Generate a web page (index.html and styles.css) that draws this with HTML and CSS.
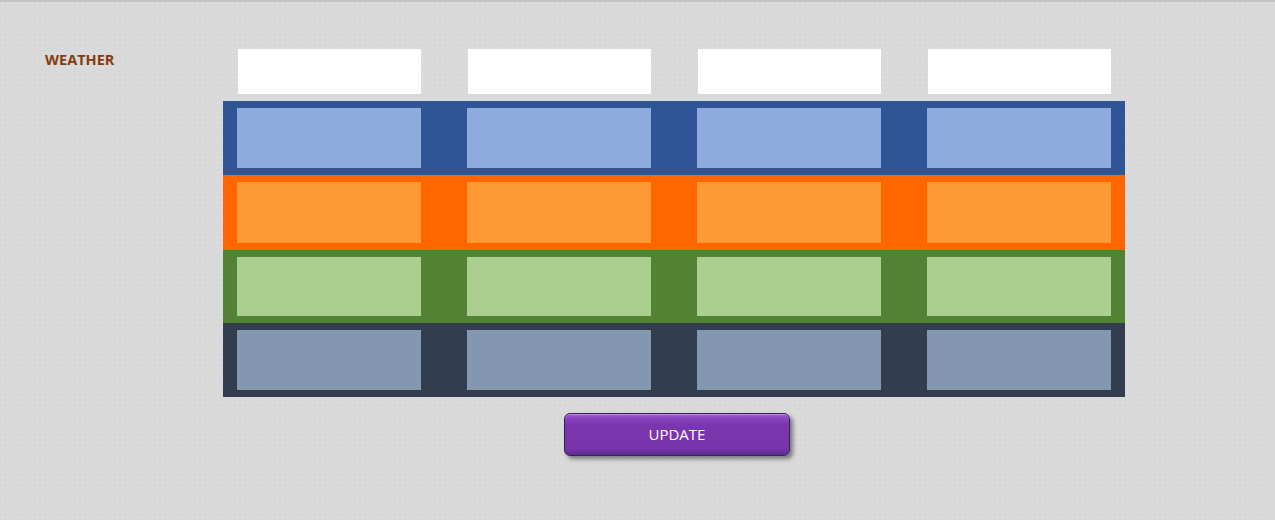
FILE: index.html
```html
<!DOCTYPE html>
<html lang="en">
<head>
    <meta charset="UTF-8">
    <meta name="viewport" content="width=device-width, initial-scale=1.0">
    <title>Weather</title>
    <link rel="stylesheet" href="styles.css">
</head>
<body>
    <div class="pagina">
        <div class="rotulo">WEATHER</div>

        <div class="painel">
            <div class="cabecalho">
                <div class="caixa-branca"></div>
                <div class="caixa-branca"></div>
                <div class="caixa-branca"></div>
                <div class="caixa-branca"></div>
            </div>

            <div class="faixa azul">
                <div class="celula"></div>
                <div class="celula"></div>
                <div class="celula"></div>
                <div class="celula"></div>
            </div>
            <div class="faixa laranja">
                <div class="celula"></div>
                <div class="celula"></div>
                <div class="celula"></div>
                <div class="celula"></div>
            </div>
            <div class="faixa verde">
                <div class="celula"></div>
                <div class="celula"></div>
                <div class="celula"></div>
                <div class="celula"></div>
            </div>
            <div class="faixa escura">
                <div class="celula"></div>
                <div class="celula"></div>
                <div class="celula"></div>
                <div class="celula"></div>
            </div>

            <button class="botao-update">UPDATE</button>
        </div>
    </div>
</body>
</html>
```

FILE: styles.css
```css
/* fundo cinza com pontinhos claros */
body {
    margin: 0;
    min-height: 100vh;
    box-sizing: border-box;
    font-family: "Open Sans", "Liberation Sans", sans-serif;
    background-color: #d9d9d9;
    background-image: radial-gradient(circle, #e6e3ee 0.6px, transparent 1px);
    background-size: 5px 5px;
    border-top: 2px solid #c4c4c4;
}

.pagina {
    display: flex;
    padding-top: 47px;
}

.rotulo {
    width: 178px;
    padding-left: 45px;
    color: #843c0c;
    font-size: 14.5px;
    font-weight: bold;
    line-height: 22px;
}

.painel {
    width: 902px;
}

.cabecalho {
    display: flex;
    gap: 47px;
    padding-left: 15px;
    margin-bottom: 7px;
}

.caixa-branca {
    width: 183px;
    height: 45px;
    background-color: #ffffff;
}

.faixa {
    display: flex;
    gap: 46px;
    padding: 7px 14px;
}

.celula {
    width: 184px;
    height: 60px;
}

.faixa.azul { background-color: #2f5597; }
.faixa.azul .celula { background-color: #8faadc; }

.faixa.laranja { background-color: #ff6600; height: 61px; }
.faixa.laranja .celula { background-color: #ff9933; height: 61px; }

.faixa.verde { background-color: #548235; }
.faixa.verde .celula { background-color: #abcf8f; height: 59px; }

.faixa.escura { background-color: #323e4f; }
.faixa.escura .celula { background-color: #8497b0; }

.botao-update {
    display: block;
    margin: 16px 0 0 341px;
    width: 226px;
    height: 43px;
    border: 1px solid #2f2452;
    border-radius: 6px;
    background: linear-gradient(#a466d6 0, #8a45c0 10%, #7b35ae 25%, #7934ab 85%, #5f2a8c 100%);
    box-shadow: inset 0 1px 0 rgba(255, 255, 255, 0.25), 3px 3px 4px rgba(0, 0, 0, 0.45);
    color: #ffffff;
    font-family: "Open Sans", "Liberation Sans", sans-serif;
    font-size: 15px;
    line-height: 38px;
    padding: 0 0 2px;
    cursor: pointer;
}
```
